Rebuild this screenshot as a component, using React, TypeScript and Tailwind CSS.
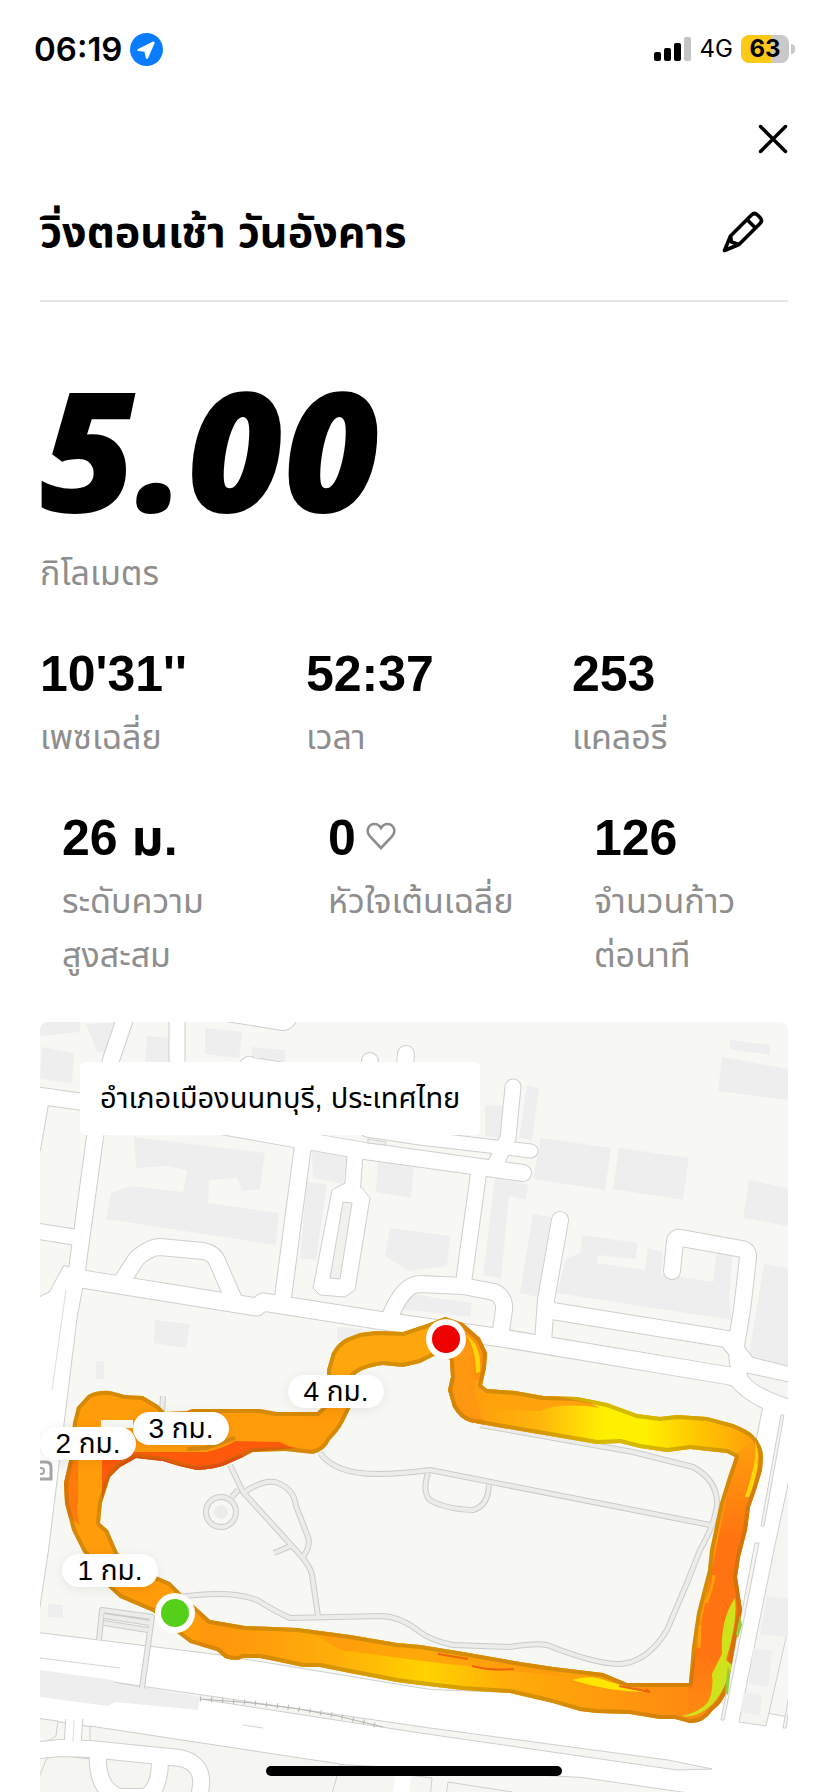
import React from "react";

const sans = "font-['Liberation_Sans','Noto_Sans_Thai',sans-serif]";

function StatusBar() {
  return (
    <div className="flex h-[98px] items-center justify-between pl-[34px] pr-[33px] font-['Inter',sans-serif]">
      <div className="flex items-center gap-2">
        <span className="text-[33px] leading-10 font-semibold">06:19</span>
        <svg className="size-[33px]" viewBox="0 0 33 33" aria-hidden="true">
          <circle cx="16.500" cy="16.500" r="16.500" fill="#0a7cff" />
          <path d="M22.600 8.700 8 16c-1.300.7-1 2 .4 2.100l6.100.7 1.300 6c.3 1.400 1.700 1.500 2.300.2L24.500 10.400c.6-1.300-.6-2.300-1.900-1.700Z" fill="#fff" />
        </svg>
      </div>
      <div className="flex items-center gap-2">
        <svg className="h-6 w-[38px]" viewBox="0 0 38 24" aria-hidden="true">
          <rect x="0" y="15" width="7" height="9" rx="2" />
          <rect x="10" y="11" width="7" height="13" rx="2" />
          <rect x="20" y="6" width="7" height="18" rx="2" />
          <rect x="30" y="0" width="7" height="24" rx="2" fill="#c4c4c4" />
        </svg>
        <span className="text-2xl leading-8">4G</span>
        <div className="flex items-center gap-[2px]">
          <div className="flex h-7 w-12 items-center justify-center rounded-[8px] bg-linear-to-r from-[#fcc917] from-63% to-[#c9c9c9] to-63% text-2xl font-bold">
            63
          </div>
          <div className="h-[10px] w-1 rounded-r-full bg-[#c9c9c9]" />
        </div>
      </div>
    </div>
  );
}

function Stat({ value, lines, icon }: { value: string; lines: string[]; icon?: React.ReactNode }) {
  return (
    <div>
      <dd className="flex items-center gap-[10px] text-[50px] leading-[60px] font-bold">
        {value}
        {icon}
      </dd>
      <dt className="pt-[6px] text-[34px] leading-[54px] whitespace-nowrap text-[#8e8e8e]">
        {lines.map((l) => (
          <span key={l} className="block">{l}</span>
        ))}
      </dt>
    </div>
  );
}

const roads = [
  { d: "M128 1010 L111 1060 L95 1137 L77 1270 L70 1310", w: 16 },
  { d: "M177 1010 L177 1090", w: 15 },
  { d: "M34 1095 L90 1103 L295 1139 L365 1151 L523 1173", w: 16 },
  { d: "M367 1130 L420 1138 L531 1151", w: 13 },
  { d: "M513 1087 L508 1138 L495 1165", w: 15 },
  { d: "M479 1170 L463 1286", w: 15 },
  { d: "M370 1061 L368 1100 M406 1054 L402 1100", w: 16 },
  { d: "M303 1145 L282 1305", w: 16 },
  { d: "M355 1155 L352 1195", w: 15 },
  { d: "M120 1284 L137 1258 Q150 1247 160 1247 L203 1251 Q214 1253 217 1261 L234 1300", w: 16 },
  { d: "M30 1230 L74 1237", w: 15 },
  { d: "M78 1279 L82 1279 L257 1307 L263 1302 L390 1322 L502 1338 L730 1376 L800 1396", w: 17 },
  { d: "M388 1322 Q402 1284 420 1284 L463 1286 L494 1292 Q505 1297 504 1310 L500 1337", w: 16 },
  { d: "M560 1220 L546 1300 L543 1342", w: 16 },
  { d: "M546 1310 L727 1339 L748 1365 L800 1378", w: 16 },
  { d: "M672 1271 L675 1241 Q676 1237 681 1238 L742 1249 Q749 1251 748 1258 L742 1310 L736 1345 L740 1378", w: 16 },
];

const avenues = [
  "M220 1020 L282 1030 Q290 1031 297 1020 Z",
  "M240 1063 q6-9 14-5 l30 5Z",
  "M30 1098 L48 1104 40 1150 30 1160Z",
  "M30 1302 L50 1292 64 1266 84 1272 80 1290 48 1550 30 1670Z",
  "M730 1383 Q741 1398 763 1408 L745 1500 690 1740 766 1730 773 1681 796 1470 796 1396Z",
  "M30 1632 L217 1655 430 1690 700 1700 800 1720 800 1800 740 1800 582 1777 340 1764 90 1726 30 1717Z",
];

const buildings = [
  "M40 1022h40v10l-40 4Z M86 1024l35-2-4 32-20-2Z M42 1047l32 6-2 30-32-4Z",
  "M147 1036l23 2v24h-25Z M205 1028l37 4-3 26-34-4Z M252 1047l33 3v12l-33-4Z",
  "M134 1137l131 16-5 36-18 2-5-13-28 2-1 23 71 10-3 32-170-26 5-26 20-7 52 6 4-22-21-4-30 2Z",
  "M312 1150l35 6-4 28-30-6Z M307 1182l20 2-11 76-16-2Z M378 1160l36 8-3 30-35-6Z M390 1228l60 8-3 30-38 5-24-15Z",
  "M527 1085l12 3-7 52-13-2Z M485 1105l18 1-2 32-16-2Z M436 1135h24l-5 15-15-2Z",
  "M541 1138l70 10-6 42-72-11Z M619 1148l70 10-6 42-70-11Z",
  "M495 1178l33 6-2 16-17-4-8 82-18-3Z M533 1214l18 3-13 80-18-4Z",
  "M730 1040l40 5v10l-40-6Z M722 1057l66 12v31l-70-9Z M749 1180l39 8v38l-45-8Z",
  "M582 1235l56 8-3 16-37-4-1 8 48 7 3-22 15 4-2 22 52 8 4-34 16 2-4 52 3 18-175-27 9-34 14-6Z",
  "M764 1264l24 4v100l-40-8Z",
  "M155 1320l35 4-4 24-32-5Z M96 1361h8v18h-8Z M337 1327l28 2-20 12h-8Z M400 1305q10-15 35-7l37 5-2 14-70-8Z M48 1604l15 1v13l-15-1Z",
];

const paths = [
  "M320 1453 Q335 1474 377 1474 Q400 1474 430 1470 L710 1525",
  "M428 1473 Q422 1492 430 1500 Q445 1509 473 1510 Q488 1506 489 1485",
  "M480 1425 L633 1452 L693 1467 Q717 1480 717 1503 Q716 1522 700 1550 L687 1583 L667 1630 Q650 1658 627 1663 Q605 1668 547 1645 Q535 1643 510 1647 L453 1645 Q430 1640 420 1632 Q400 1616 380 1616 L290 1618 Q278 1613 257 1600 Q230 1590 180 1597",
  "M230 1465 L243 1492 L293 1547 Q311 1566 312 1575 L318 1616",
  "M243 1493 Q262 1480 275 1482 Q294 1488 296 1506 L308 1537 Q311 1546 303 1557",
  "M232 1497 L238 1490 M274 1553 L293 1545",
  "M99 1640 L102 1610 L152 1617 L142 1688 M104 1616 L150 1623 M104 1623 L148 1630",
  "M162 1413 L163 1396",
];

const service =
  "M75 1708 L72 1752 M20 1752 L60 1748 90 1749 180 1758 Q203 1763 201 1785 L199 1800 M98 1753 Q96 1790 120 1797 H145 Q160 1790 160 1760";

const ring =
  "M73 1423 L77 1407 88 1395 Q97 1390 110 1391 L125 1395 143 1396 158 1405 165 1412 187 1411 192 1409 260 1409 277 1412 317 1412 327 1403 327 1370 332 1353 Q338 1342 347 1338 L360 1333 377 1331 403 1332 430 1323 445 1317 463 1323 480 1338 487 1353 486 1368 482 1385 487 1389 515 1391 543 1396 577 1397 607 1403 637 1414 660 1417 677 1415 707 1417 733 1424 Q748 1430 753 1435 Q763 1445 763 1458 L762 1470 756 1490 750 1507 747 1530 740 1557 737 1577 742 1610 736 1640 732 1663 727 1690 Q723 1703 713 1710 Q703 1724 690 1723 L675 1719 660 1719 630 1714 597 1713 580 1711 553 1703 510 1693 463 1690 420 1685 397 1682 350 1673 320 1667 303 1667 275 1661 260 1658 243 1658 Q237 1662 225 1658 L217 1651 190 1643 173 1630 153 1612 120 1598 108 1587 95 1565 83 1552 72 1530 65 1503 64 1483 70 1457 Z" +
  "M120 1467 L136 1458 163 1461 Q180 1467 197 1470 Q215 1469 225 1465 L243 1457 253 1452 285 1451 313 1454 Q325 1451 330 1440 Q342 1428 347 1415 L353 1403 353 1377 Q360 1368 383 1365 L403 1367 420 1363 440 1353 450 1360 451 1377 448 1390 453 1407 Q460 1419 470 1422 L497 1427 597 1444 620 1443 640 1448 667 1452 690 1449 727 1453 735 1457 728 1477 720 1503 710 1550 708 1570 697 1613 692 1647 689 1683 660 1683 627 1683 603 1673 553 1667 520 1662 463 1652 420 1645 397 1643 350 1635 297 1628 245 1626 210 1620 197 1608 183 1595 170 1582 158 1577 118 1553 108 1530 100 1523 102 1503 110 1477 Z";

function RunMap() {
  return (
    <svg
      className="block h-full w-full"
      viewBox="40 1022 748 770"
      preserveAspectRatio="xMinYMin slice"
      role="img"
      aria-label="แผนที่เส้นทางวิ่ง"
    >
      <defs>
        <clipPath id="ring"><path d={ring} clipRule="evenodd" /></clipPath>
        <linearGradient id="north" gradientUnits="userSpaceOnUse" x1="480" x2="755" y1="0" y2="0">
          <stop offset="0" stopColor="#ff9f0c" />
          <stop offset=".22" stopColor="#ffb60a" />
          <stop offset=".45" stopColor="#fff000" />
          <stop offset=".6" stopColor="#fff000" />
          <stop offset=".78" stopColor="#ffc800" />
          <stop offset="1" stopColor="#ff9f0c" />
        </linearGradient>
        <linearGradient id="south" gradientUnits="userSpaceOnUse" x1="220" x2="680" y1="0" y2="0">
          <stop offset="0" stopColor="#ff960c" />
          <stop offset=".25" stopColor="#ffae08" />
          <stop offset=".45" stopColor="#ffd200" />
          <stop offset=".62" stopColor="#ffad08" />
          <stop offset="1" stopColor="#ff8c10" />
        </linearGradient>
        <linearGradient id="east" gradientUnits="userSpaceOnUse" x1="0" x2="0" y1="1440" y2="1720">
          <stop offset="0" stopColor="#ffa00c" />
          <stop offset=".35" stopColor="#ff7410" />
          <stop offset=".75" stopColor="#ff7410" />
          <stop offset="1" stopColor="#ff8d10" />
        </linearGradient>
      </defs>

      <rect x="40" y="1022" width="748" height="770" fill="#f7f8f3" />
      <g fill="#eeeeee">{buildings.map((d) => <path key={d} d={d} />)}</g>

      <g fill="none" strokeLinecap="round" strokeLinejoin="round">
        {avenues.map((d) => <path key={d} d={d} stroke="#cfcfcd" strokeWidth="2" />)}
        {roads.map((r) => <path key={r.d} d={r.d} stroke="#cfcfcd" strokeWidth={r.w + 2} />)}
        <path d="M345 1183 332 1190 313 1288 320 1295 345 1297 355 1290 370 1198 362 1188Z" fill="#fff" stroke="#cfcfcd" />
        {roads.map((r) => <path key={r.d} d={r.d} stroke="#fff" strokeWidth={r.w} />)}
      </g>
      <g fill="#fff">{avenues.map((d) => <path key={d} d={d} />)}</g>
      <path d="M343 1202l9 1-12 76-10-1Z M368 1139l18 3-1 3-17-2Z" fill="#f1f2ed" stroke="#cfcfcd" />
      <path d="M66 1290 52 1390" stroke="#dededc" fill="none" />

      <g fill="#f5f6f1" stroke="#cfcfcd">
        <path d="M781 1415 761 1526h3l20-111Z M755 1543 721 1720h3l35-177Z" />
        <path d="M790 1475 775 1545 755 1643 739 1722 766 1726 790 1620Z" />
        <path d="M790 1690 783 1728h3l4-25Z" />
        <path d="M113 1682 430 1728 668 1760 712 1769 677 1770 420 1733 200 1699Z" />
        <path d="M747 1373 789 1382 789 1399Q748 1385 747 1373Z" />
        <path d="M35 1718 58 1721 56 1736 35 1748Z M90 1726 340 1764 345 1800 30 1800 46 1760Q50 1755 58 1755L90 1759 90 1742Z" />
        <path d="M340 1766 432 1778 430 1800 330 1800Z M448 1782 512 1792 446 1796Z" />
      </g>
      <path d="M40 1670l72 10 3 3 85 14-2 13-83-8-7 4-68-9Z M767 1596l21 3v38l-28-3Z M753 1648l19 3-4 36-19-3Z M744 1692l18 3-2 20-20-3Z" fill="#eeeeee" />
      <path d="M40 1658l80 10M243 1725l20 3" stroke="#d5d5d3" />
      <g fill="none" strokeLinejoin="round">
        <path d={service} stroke="#cfcfcd" strokeWidth="18" />
        <path d={service} stroke="#fff" strokeWidth="16" />
        <path d="M404 1770 400 1800" stroke="#fff" strokeWidth="16" />
      </g>
      <path d="M64 1704h22v15h-22Z" fill="#fff" />
      <path d="M74 1720 73 1742" stroke="#dededc" />
      <path d="M200 1699 Q300 1704 383 1727" fill="none" stroke="#b5b5b3" />
      <path d="M200 1699 Q300 1704 383 1727" fill="none" stroke="#b5b5b3" strokeWidth="5" strokeDasharray="1 10" />

      <g fill="none" strokeLinejoin="round">
        {paths.map((d) => <path key={d} d={d} stroke="#cbcbc9" strokeWidth="6" />)}
        <circle cx="221" cy="1512" r="15" stroke="#cbcbc9" strokeWidth="6" />
        {paths.map((d) => <path key={d} d={d} stroke="#ecedea" strokeWidth="4" />)}
        <circle cx="221" cy="1512" r="15" stroke="#ecedea" strokeWidth="4" />
      </g>
      <circle cx="221" cy="1512" r="7" fill="#ecedea" />

      <g>
        <path d="M34 1462 h12 q5 0 5 5 v12 h-17" fill="#fff" stroke="#a5a5a5" strokeWidth="3" />
        <circle cx="41" cy="1471" r="3" fill="none" stroke="#a5a5a5" strokeWidth="2" />
      </g>

      <g clipPath="url(#ring)">
        <rect x="40" y="1300" width="748" height="440" fill="#ff9c0a" />
        <path d="M327 1300h120v80h-120Z" fill="#ffa60c" />
        <path d="M448 1310h50l-14 78 2 50-50-15Z" fill="#ff9010" />
        <path d="M470 1380 760 1400 760 1440 735 1460 470 1450Z" fill="url(#north)" />
        <path d="M448 1340 472 1345 476 1400 490 1440 445 1430Z" fill="#ff9610" />
        <path d="M200 1600H690V1730H200Z" fill="url(#south)" />
        <path d="M735 1455 770 1425V1740H685L689 1683Z" fill="url(#east)" />
        <path d="M484 1385 520 1389 590 1403 600 1408Q560 1402 540 1411L500 1410Z" fill="#ffa30c" />
        <path d="M300 1625 420 1643 560 1668 560 1676 430 1662 340 1650Z" fill="#ff970c" opacity=".7" />
        <path d="M120 1452 H206 Q225 1448 235 1441 L280 1442 Q288 1447 298 1448 L250 1452 Q225 1475 197 1471 Q165 1460 136 1458 L110 1478 102 1500V1455Z" fill="#ff5a0c" />
        <path d="M78 1460V1500Q76 1515 80 1525L60 1510V1460Z" fill="#ff7a0c" />
        <path d={ring} fill="none" stroke="#9a7000" strokeOpacity=".42" strokeWidth="8" strokeLinejoin="round" />
        <path d="M187 1449 206 1448 235 1438" fill="none" stroke="#d98a12" strokeWidth="4" />
        <path d="M120 1467 136 1459 163 1462Q195 1475 225 1464L243 1457" fill="none" stroke="#dd4e12" strokeWidth="5" />
      </g>
      <path d="M101 1420h32v8h-32Z" fill="#f7f8f3" />
      <path d="M466 1335Q482 1345 480 1372L476 1373Q476 1348 466 1335Z M755 1440Q763 1462 749 1497H745Q750 1482 754 1465Q757 1450 755 1440Z" fill="#ffd80a" />
      <path d="M735 1598Q738 1620 726 1660L732 1665Q723 1700 702 1712Q690 1718 682 1716Q700 1712 708 1702Q714 1690 712 1674L722 1654Q720 1620 735 1598Z" fill="#cfe31c" />
      <path d="M740 1615l2 10-4 13-2-4ZM728 1665l2 10-2 20-3-3Z" fill="#95cb38" />
      <path d="M714 1575Q712 1590 706 1603M700 1625L699 1648" stroke="#ffa00c" strokeWidth="3" fill="none" />
      <path d="M572 1680Q590 1674 607 1681L645 1692Q610 1692 572 1680Z" fill="#ffe600" />
      <path d="M619 1686 650 1692 646 1689M438 1654l30 5M472 1666q18 5 42 3" stroke="#f0620c" strokeWidth="2" fill="none" />

      <circle cx="446" cy="1339" r="20" fill="#fff" />
      <circle cx="446" cy="1339" r="14" fill="#ee0000" />
      <circle cx="175" cy="1613" r="20" fill="#fff" />
      <circle cx="175" cy="1613" r="14" fill="#55cf18" />
    </svg>
  );
}

function Marker({ place, children }: { place: string; children: React.ReactNode }) {
  return (
    <span className={`absolute flex h-[33px] w-24 items-center justify-center rounded-full bg-white text-[28px] leading-[33px] whitespace-nowrap shadow-[0_2px_12px_rgba(0,0,0,0.08)] ${place}`}>
      {children}
    </span>
  );
}

export default function App() {
  return (
    <div className={`relative flex min-h-screen flex-col overflow-hidden bg-white text-black ${sans}`}>
      <StatusBar />
      <main className="flex flex-col px-10">
        <div className="flex h-[82px] items-center justify-end">
          <button type="button" aria-label="ปิด">
            <svg className="size-[30px]" viewBox="0 0 30 30" fill="none" stroke="#000" strokeWidth="3.500" strokeLinecap="round">
              <path d="M2.500 2.500 27.500 27.500M27.500 2.500 2.500 27.500" />
            </svg>
          </button>
        </div>
        <header className="flex h-[122px] items-center justify-between border-b-2 border-[#e5e5e5] pr-6 pb-4">
          <h1 className="text-[43px] leading-[60px] font-bold">วิ่งตอนเช้า วันอังคาร</h1>
          <button type="button" aria-label="แก้ไขชื่อ">
            <svg className="size-[42px]" viewBox="0 0 42 42" fill="none" stroke="#000" strokeWidth="3.600" strokeLinejoin="round">
              <path d="M2.500 39.500 8.500 25 29.500 4Q32.500 1 35.500 4L38 6.500Q41 9.500 38 12.500L17 33.500Z" />
              <path d="M25 8.500 33.500 17M8.500 25 9.500 31 17 33.500" />
            </svg>
          </button>
        </header>
        <p className="mt-[66px] font-['Open_Sans',sans-serif] text-[166px] leading-[160px] font-extrabold italic">5.00</p>
        <p className="mt-[18px] text-[34px] leading-[54px] text-[#8e8e8e]">กิโลเมตร</p>
        <dl className="mt-11 grid grid-cols-[1fr_1fr_216px]">
          <Stat value={"10'31''"} lines={["เพซเฉลี่ย"]} />
          <Stat value="52:37" lines={["เวลา"]} />
          <Stat value="253" lines={["แคลอรี่"]} />
        </dl>
        <dl className="mt-11 grid grid-cols-[1fr_1fr_194px] pl-[22px]">
          <Stat value="26 ม." lines={["ระดับความ", "สูงสะสม"]} />
          <Stat
            value="0"
            lines={["หัวใจเต้นเฉลี่ย"]}
            icon={
              <svg className="mb-1 h-7 w-[30px]" viewBox="0 0 30 28" fill="none" stroke="#8e8e8e" strokeWidth="2.600" aria-hidden="true">
                <path d="M15 26 4 14.500C-1 8.500 3 2 8.500 2 11.500 2 13.500 3.500 15 6 16.500 3.500 18.500 2 21.500 2 27 2 31 8.500 26 14.500Z" />
              </svg>
            }
          />
          <Stat value="126" lines={["จำนวนก้าว", "ต่อนาที"]} />
        </dl>
        <section className="relative mt-10 h-[770px] overflow-hidden rounded-t-[8px]">
          <RunMap />
          <p className="absolute top-10 left-10 flex h-[73px] items-center rounded-[6px] bg-white px-5 text-[29px] whitespace-nowrap">
            อำเภอเมืองนนทบุรี, ประเทศไทย
          </p>
          <Marker place="top-[353px] left-[248px]">4 กม.</Marker>
          <Marker place="top-[405px] left-0">2 กม.</Marker>
          <Marker place="top-[390px] left-[93px]">3 กม.</Marker>
          <Marker place="top-[532px] left-[22px]">1 กม.</Marker>
        </section>
      </main>
      <div className="fixed bottom-4 left-1/2 h-[10px] w-[296px] -translate-x-1/2 rounded-full bg-black" />
    </div>
  );
}
